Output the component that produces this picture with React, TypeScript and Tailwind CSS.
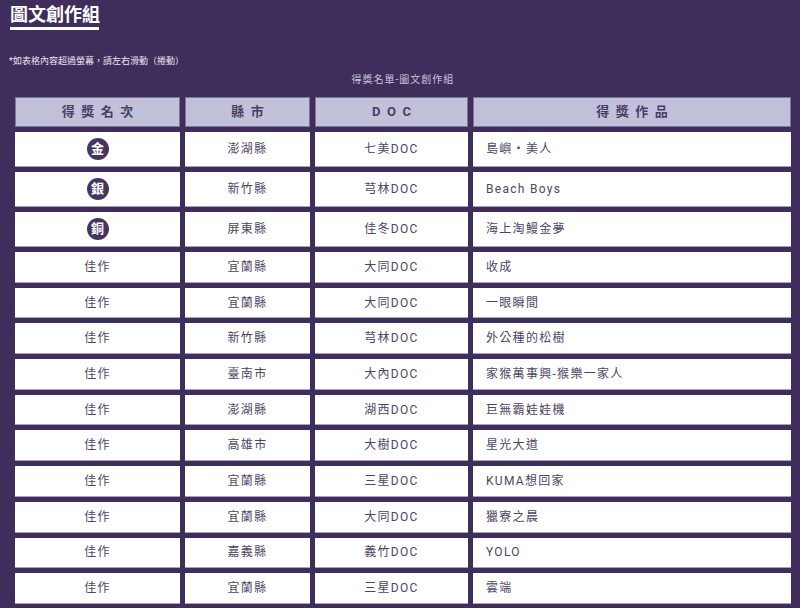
type Row = {
  rank: string;
  medal?: boolean;
  county: string;
  doc: string;
  work: string;
};

const ROWS: Row[] = [
  { rank: '金', medal: true, county: '澎湖縣', doc: '七美DOC', work: '島嶼・美人' },
  { rank: '銀', medal: true, county: '新竹縣', doc: '芎林DOC', work: 'Beach Boys' },
  { rank: '銅', medal: true, county: '屏東縣', doc: '佳冬DOC', work: '海上淘鰻金夢' },
  { rank: '佳作', county: '宜蘭縣', doc: '大同DOC', work: '收成' },
  { rank: '佳作', county: '宜蘭縣', doc: '大同DOC', work: '一眼瞬間' },
  { rank: '佳作', county: '新竹縣', doc: '芎林DOC', work: '外公種的松樹' },
  { rank: '佳作', county: '臺南市', doc: '大內DOC', work: '家猴萬事興-猴樂一家人' },
  { rank: '佳作', county: '澎湖縣', doc: '湖西DOC', work: '巨無霸娃娃機' },
  { rank: '佳作', county: '高雄市', doc: '大樹DOC', work: '星光大道' },
  { rank: '佳作', county: '宜蘭縣', doc: '三星DOC', work: 'KUMA想回家' },
  { rank: '佳作', county: '宜蘭縣', doc: '大同DOC', work: '獵寮之晨' },
  { rank: '佳作', county: '嘉義縣', doc: '義竹DOC', work: 'YOLO' },
  { rank: '佳作', county: '宜蘭縣', doc: '三星DOC', work: '雲端' },
];

const HEADERS = ['得獎名次', '縣市', 'DOC', '得獎作品'];

const cell =
  'p-0 bg-white border-b border-[#aaa4bb] text-[12px] tracking-[1.3px] text-[#4f4563]';

export default function App() {
  return (
    <div className="w-[800px] h-[608px] overflow-hidden bg-[#3f2d5b] font-['Roboto','Noto_Sans_CJK_TC',sans-serif]">
      {/* Title */}
      <div className="pl-[10px] pt-[3px]">
        <h1 className="text-[18px] leading-[24px] font-bold text-white">圖文創作組</h1>
        <div className="w-[89px] h-[3px] bg-white" />
      </div>

      <p className="pl-[9px] mt-[25px] text-[9px] leading-[12px] text-[#ebe7f2]">
        *如表格內容超過螢幕，請左右滑動（捲動）
      </p>

      <div className="w-[786px] ml-[10px]">
        <p className="mt-[6px] text-center text-[10px] leading-[14px] tracking-[0.1em] text-[#c8c5dc]">
          得獎名單-圖文創作組
        </p>

        <table className="mt-[5px] w-[786px] table-fixed border-separate border-spacing-[5px]">
          <colgroup>
            <col className="w-[165px]" />
            <col className="w-[125px]" />
            <col className="w-[153px]" />
            <col className="w-[318px]" />
          </colgroup>
          <thead>
            <tr>
              {HEADERS.map((h) => (
                <th
                  key={h}
                  className="h-[30px] p-0 bg-[#c2c1da] border border-[#7f72a0] text-center text-[13px] font-bold tracking-[0.5em] text-[#4a3d63]"
                >
                  <span className="pl-[0.5em]">{h}</span>
                </th>
              ))}
            </tr>
          </thead>
          <tbody>
            {ROWS.map((r, i) => (
              <tr key={i}>
                <td className={`${cell} text-center ${r.medal ? 'h-[35px]' : 'h-[30.7px]'}`}>
                  {r.medal ? (
                    <span className="inline-flex w-[22px] h-[22px] rounded-full bg-[#46355f] items-center justify-center text-white text-[13px] font-bold tracking-normal align-middle">
                      {r.rank}
                    </span>
                  ) : (
                    r.rank
                  )}
                </td>
                <td className={`${cell} text-center`}>{r.county}</td>
                <td className={`${cell} text-center`}>{r.doc}</td>
                <td className={`${cell} text-left pl-[13px]`}>{r.work}</td>
              </tr>
            ))}
          </tbody>
        </table>
      </div>
    </div>
  );
}
